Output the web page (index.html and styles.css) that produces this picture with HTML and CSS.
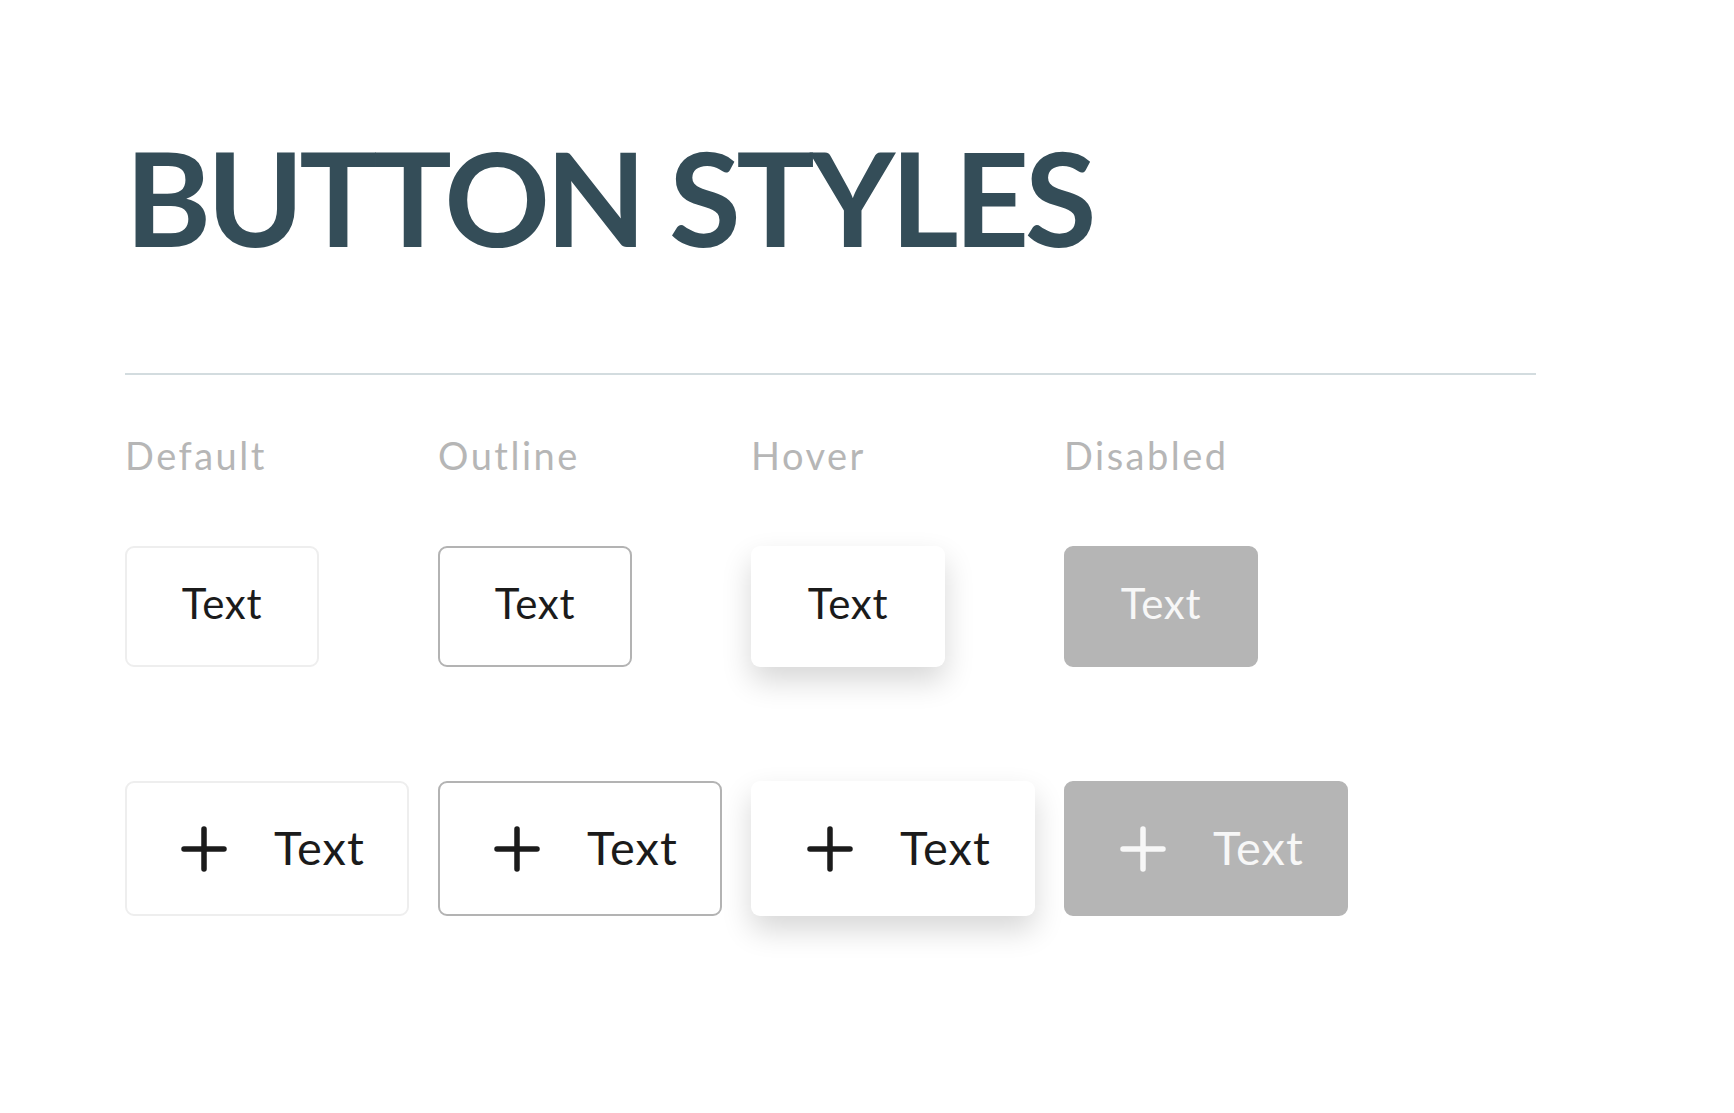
FILE: index.html
```html
<!DOCTYPE html>
<html lang="en">
<head>
<meta charset="utf-8">
<title>Button Styles</title>
<link rel="stylesheet" href="styles.css">
</head>
<body>
<main class="page">
  <h1 class="title">BUTTON STYLES</h1>
  <hr class="divider">
  <div class="grid labels">
    <span class="label">Default</span>
    <span class="label">Outline</span>
    <span class="label">Hover</span>
    <span class="label">Disabled</span>
  </div>
  <div class="grid row-one">
    <button class="btn btn-default">Text</button>
    <button class="btn btn-outline">Text</button>
    <button class="btn btn-hover">Text</button>
    <button class="btn btn-disabled" disabled>Text</button>
  </div>
  <div class="grid row-two">
    <button class="btn btn-icon btn-default"><svg class="plus" viewBox="0 0 46 46"><path d="M23 3V43M3 23H43"/></svg><span>Text</span></button>
    <button class="btn btn-icon btn-outline"><svg class="plus" viewBox="0 0 46 46"><path d="M23 3V43M3 23H43"/></svg><span>Text</span></button>
    <button class="btn btn-icon btn-hover"><svg class="plus" viewBox="0 0 46 46"><path d="M23 3V43M3 23H43"/></svg><span>Text</span></button>
    <button class="btn btn-icon btn-disabled" disabled><svg class="plus" viewBox="0 0 46 46"><path d="M23 3V43M3 23H43"/></svg><span>Text</span></button>
  </div>
</main>
</body>
</html>
```

FILE: styles.css
```css
html, body {
  margin: 0;
  padding: 0;
  background: #ffffff;
}

.page {
  padding-left: 125px;
  padding-bottom: 60px;
  width: 1411px;
  font-family: Lato, "Liberation Sans", sans-serif;
}

.title {
  margin: 131px 0 0;
  font-family: Lato, "Liberation Sans", sans-serif;
  font-weight: 700;
  font-size: 131px;
  line-height: 131px;
  letter-spacing: -4.6px;
  color: #344d58;
}

.divider {
  margin: 111px 0 0;
  border: 0;
  height: 2px;
  background: #d3dcdf;
}

.grid {
  display: grid;
  grid-template-columns: repeat(4, 313px);
}

.labels {
  margin-top: 61px;
}

.label {
  font-size: 38px;
  line-height: 38px;
  color: #b6b6b6;
  letter-spacing: 2.5px;
}

.row-one {
  margin-top: 72px;
}

.row-two {
  margin-top: 114px;
}

.btn {
  box-sizing: border-box;
  font-family: Lato, "Liberation Sans", sans-serif;
  font-size: 42px;
  letter-spacing: 0.7px;
  color: #1b1b1b;
  background: #ffffff;
  border: 2px solid transparent;
  border-radius: 9px;
  padding: 0 0 8px;
  width: 194px;
  height: 121px;
  display: flex;
  align-items: center;
  justify-content: center;
}

.btn-default {
  border-color: #eeeeee;
}

.btn-outline {
  border-color: #b3b3b3;
}

.btn-hover {
  box-shadow: 0 14px 30px rgba(0, 0, 0, 0.16);
}

.btn-disabled {
  background: #b5b5b5;
  border-color: #b5b5b5;
  color: #f7f7f7;
}

.btn-icon {
  width: 284px;
  height: 135px;
  justify-content: flex-start;
  padding: 0 0 4px 54px;
  font-size: 47px;
  letter-spacing: 1px;
  gap: 47px;
}

.plus {
  width: 46px;
  height: 46px;
  margin-top: 4px;
  fill: none;
  stroke: currentColor;
  stroke-width: 5.5;
  stroke-linecap: round;
}
```
